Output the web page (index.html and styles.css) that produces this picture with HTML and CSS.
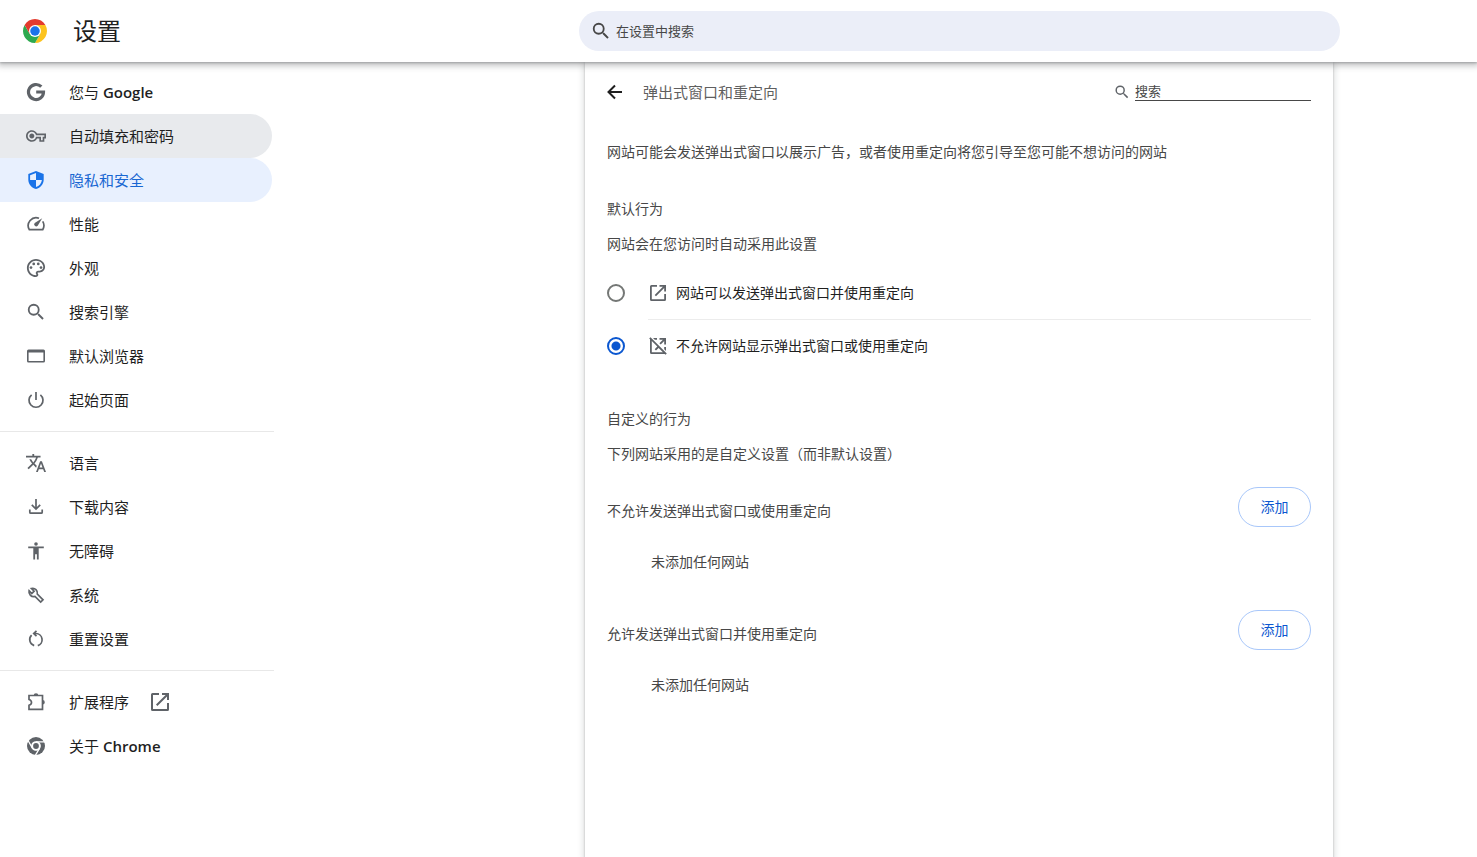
FILE: index.html
```
<!DOCTYPE html>
<html lang="zh-CN">
<head>
<meta charset="utf-8">
<title>设置</title>
<link rel="stylesheet" href="styles.css">
</head>
<body>
<header class="topbar">
  <div class="brand">
    <svg class="logo" viewBox="0 0 48 48" aria-hidden="true">
      <path fill="#fcc31e" d="M24 12H44.78A24 24 0 0 1 24 48L34.4 30Z"/>
      <path fill="#2da94f" d="M13.6 30 3.22 12A24 24 0 0 0 24 48L34.4 30Z"/>
      <path fill="#e33b2e" d="M3.22 12 13.6 30 24 24V12H44.78A24 24 0 0 0 3.22 12Z"/>
      <circle cx="24" cy="24" r="12" fill="#fff"/>
      <circle cx="24" cy="24" r="9.5" fill="#1a73e8"/>
    </svg>
    <h1 class="brand-title">设置</h1>
  </div>
  <div class="search">
    <svg class="icon search-icon" viewBox="1 1 22 22" aria-hidden="true"><path d="M15.5 14h-.79l-.28-.27A6.47 6.47 0 0 0 16 9.5 6.5 6.5 0 1 0 9.5 16c1.61 0 3.09-.59 4.23-1.57l.27.28v.79l5 4.99L20.49 19l-4.99-5zm-6 0a4.5 4.5 0 1 1 0-9 4.5 4.5 0 0 1 0 9z"/></svg>
    <input class="search-input" type="text" placeholder="在设置中搜索" aria-label="在设置中搜索">
  </div>
</header>
<div class="layout">
  <nav class="sidebar">
    <a class="item" href="#"><svg class="icon google" viewBox="0 0 20 20" aria-hidden="true"><path d="M15.300 4.700A7.500 7.500 0 1 0 17.500 10H10.200"/></svg><span>您与 <span class="latin">Google</span></span></a>
    <a class="item item-hover" href="#"><svg class="icon" viewBox="0 0 24 24" aria-hidden="true"><path d="M22 19h-6v-4h-2.680c-1.140 2.420-3.600 4-6.320 4-3.860 0-7-3.140-7-7s3.140-7 7-7c2.720 0 5.170 1.580 6.320 4H24v6h-2v4zm-4-2h2v-4h2v-2H11.940l-.23-.67C11.010 8.340 9.110 7 7 7c-2.760 0-5 2.240-5 5s2.240 5 5 5c2.110 0 4.010-1.340 4.710-3.330l.23-.67H18v4zM7 15c-1.650 0-3-1.350-3-3s1.350-3 3-3 3 1.350 3 3-1.350 3-3 3z"/></svg><span>自动填充和密码</span></a>
    <a class="item item-active" href="#" aria-current="page"><svg class="icon" viewBox="0 0 20 20" aria-hidden="true"><path fill-rule="evenodd" d="M10 1 2.300 4v5.400C2.300 14 5.500 17.800 10 19c4.500-1.200 7.700-5 7.700-9.600V4zM10 3v7h5.900c-.4 3.300-2.700 6.100-5.900 7.100V10H4.100V5.200z"/></svg><span>隐私和安全</span></a>
    <a class="item" href="#"><svg class="icon line" viewBox="0 0 20 20" aria-hidden="true"><path d="M13 4.200A8 8 0 0 0 3.300 15.700H16.700A8 8 0 0 0 16.700 7.400"/><path class="solid" d="M16.200 4.200 11.700 11.700a2 2 0 1 1-3-2.700z"/></svg><span>性能</span></a>
    <a class="item" href="#"><svg class="icon" viewBox="1 1 22 22" aria-hidden="true"><path d="M12 22C6.490 22 2 17.510 2 12S6.490 2 12 2s10 4.040 10 9c0 3.310-2.690 6-6 6h-1.770c-.28 0-.5.22-.5.5 0 .12.05.23.13.33.41.47.64 1.060.64 1.670 0 1.380-1.120 2.500-2.500 2.500zm0-18c-4.410 0-8 3.590-8 8s3.590 8 8 8c.28 0 .5-.22.5-.5 0-.16-.08-.28-.14-.35-.41-.46-.63-1.050-.63-1.650 0-1.380 1.120-2.500 2.500-2.500H16c2.210 0 4-1.790 4-4 0-3.860-3.590-7-8-7z"/><circle cx="6.500" cy="11.500" r="1.500"/><circle cx="9.500" cy="7.500" r="1.500"/><circle cx="14.500" cy="7.500" r="1.500"/><circle cx="17.500" cy="11.500" r="1.500"/></svg><span>外观</span></a>
    <a class="item" href="#"><svg class="icon" viewBox="1 1 22 22" aria-hidden="true"><path d="M15.500 14h-.79l-.28-.27A6.470 6.470 0 0 0 16 9.500 6.500 6.500 0 1 0 9.500 16c1.610 0 3.090-.59 4.230-1.570l.27.28v.79l5 4.990L20.490 19l-4.990-5zm-6 0a4.500 4.500 0 1 1 0-9 4.500 4.500 0 0 1 0 9z"/></svg><span>搜索引擎</span></a>
    <a class="item" href="#"><svg class="icon" viewBox="0 0 20 20" aria-hidden="true"><path fill-rule="evenodd" d="M2.500 3.500h15A1.500 1.500 0 0 1 19 5v10a1.500 1.500 0 0 1-1.500 1.500h-15A1.500 1.500 0 0 1 1 15V5a1.500 1.500 0 0 1 1.500-1.500zM2.600 6.600v8.300h14.800V6.600z"/></svg><span>默认浏览器</span></a>
    <a class="item" href="#"><svg class="icon line" viewBox="0 0 20 20" aria-hidden="true"><path d="M10 2v8M5.600 4.800a7 7 0 1 0 8.800 0"/></svg><span>起始页面</span></a>
    <hr class="divider">
    <a class="item" href="#"><svg class="icon" viewBox="1 1 22 22" aria-hidden="true"><path d="m12.870 15.070-2.540-2.510.03-.03A17.520 17.520 0 0 0 14.070 6H17V4h-7V2H8v2H1v2h11.170C11.500 7.920 10.440 9.750 9 11.350 8.070 10.320 7.300 9.190 6.690 8h-2c.73 1.630 1.730 3.170 2.980 4.560l-5.090 5.020L4 19l5-5 3.110 3.110.76-2.040zM18.500 10h-2L12 22h2l1.120-3h4.750L21 22h2l-4.500-12zm-2.620 7 1.620-4.330L19.120 17h-3.240z"/></svg><span>语言</span></a>
    <a class="item" href="#"><svg class="icon line" viewBox="0 0 20 20" aria-hidden="true"><path d="M10 2v9.500M5.800 7.800 10 12l4.200-4.200M3.800 12.500v2.700q0 1 1 1h10.400q1 0 1-1v-2.700"/></svg><span>下载内容</span></a>
    <a class="item" href="#"><svg class="icon" viewBox="0 0 20 20" aria-hidden="true"><circle cx="10" cy="3" r="1.800"/><path d="M2.200 5.600h15.600v1.700h-5.100v11.200h-1.800v-5.300H9.100v5.300H7.300V7.300H2.200z"/></svg><span>无障碍</span></a>
    <a class="item" href="#"><svg class="icon line" viewBox="0 0 20 20" aria-hidden="true"><path d="M5.400 3.500 8.100 6.200 5.800 8.500 3.100 5.800A4.700 4.700 0 0 0 9 11.400L14.700 17.100 17 14.800 11.300 9.100A4.700 4.700 0 0 0 5.400 3.500Z"/></svg><span>系统</span></a>
    <a class="item" href="#"><svg class="icon line" viewBox="0 0 20 20" aria-hidden="true"><path d="M8.200 16.600A6.200 6.200 0 0 1 5.600 6.200M11.800 16.600A6.200 6.200 0 0 0 10 4.500H8M10.500 1.800 7.700 4.500 10.500 7.200"/></svg><span>重置设置</span></a>
    <hr class="divider">
    <a class="item" href="#"><svg class="icon line" viewBox="0 0 20 20" aria-hidden="true"><path d="M3 3.500H16.500V17.300H3V13.300Q5.500 12.500 5.500 10.400T3 7.500Z"/><path class="solid" d="M7.700 3.500a2.300 2.300 0 0 1 4.600 0zM16.500 8a2.300 2.300 0 0 1 0 4.600z"/></svg><span>扩展程序</span><svg class="icon launch" viewBox="0 0 20 20" aria-hidden="true"><path d="M9 1v2H3v14h14v-6h2v6.500a1.500 1.500 0 0 1-1.500 1.500h-15A1.500 1.500 0 0 1 1 17.500v-15A1.500 1.500 0 0 1 2.500 1zM12 1h7v7h-2V4.400L7.400 14 6 12.600 15.600 3H12z"/></svg></a>
    <a class="item" href="#"><svg class="icon" viewBox="0 0 20 20" aria-hidden="true"><circle cx="10" cy="10" r="9"/><g class="cut"><circle cx="10" cy="10" r="4.200"/><path d="M10 5.800H19M6.400 12.100 1.900 4.300M13.600 12.100 9.100 19.900"/></g><circle cx="10" cy="10" r="2.900"/></svg><span>关于 <span class="latin">Chrome</span></span></a>
  </nav>
  <main class="panel">
    <div class="panel-head">
      <button class="back" type="button" aria-label="返回"><svg class="back-icon" viewBox="0 0 16 16" aria-hidden="true"><path d="M15 8H1.700M8 1.500 1.500 8 8 14.500"/></svg></button>
      <h2 class="panel-title">弹出式窗口和重定向</h2>
      <label class="filter">
        <svg class="icon filter-icon" viewBox="1 1 22 22" aria-hidden="true"><path d="M15.500 14h-.79l-.28-.27A6.470 6.470 0 0 0 16 9.500 6.500 6.500 0 1 0 9.500 16c1.610 0 3.090-.59 4.230-1.570l.27.28v.79l5 4.990L20.490 19l-4.990-5zm-6 0a4.500 4.500 0 1 1 0-9 4.500 4.500 0 0 1 0 9z"/></svg>
        <input class="filter-input" type="text" placeholder="搜索" aria-label="搜索">
      </label>
    </div>
    <p class="intro">网站可能会发送弹出式窗口以展示广告，或者使用重定向将您引导至您可能不想访问的网站</p>
    <section class="section">
      <h3 class="section-title">默认行为</h3>
      <p class="section-text">网站会在您访问时自动采用此设置</p>
      <div class="options">
        <label class="option">
          <input class="radio" type="radio" name="popups">
          <span class="option-body"><svg class="option-icon" viewBox="0 0 20 20" aria-hidden="true"><path d="M9 2v1.800H3.800v12.400h12.400V11H18v5.500a1.500 1.500 0 0 1-1.500 1.500h-13A1.500 1.500 0 0 1 2 16.500v-13A1.500 1.500 0 0 1 3.500 2zM11.500 2H18v6.500h-1.800V5.100L8 13.300 6.700 12l8.200-8.200h-3.400z"/></svg>网站可以发送弹出式窗口并使用重定向</span>
        </label>
        <label class="option">
          <input class="radio" type="radio" name="popups" checked>
          <span class="option-body"><svg class="option-icon" viewBox="0 0 20 20" aria-hidden="true"><path d="M1.200 2.500 2.500 1.200 18.800 17.500 17.500 18.800 16.700 18H3.500A1.500 1.500 0 0 1 2 16.500V3.300zM3.800 5.100v11.100h11.100L10.600 11.900 8 14.500 6.700 13.200 9.300 10.600zM5 2h4v1.800H6.800zM11.500 2H18v6.500h-1.800V5.100L12.700 8.600 11.400 7.300 14.900 3.800h-3.400zM16.200 11H18v4l-1.800-1.800z"/></svg>不允许网站显示弹出式窗口或使用重定向</span>
        </label>
      </div>
    </section>
    <section class="section">
      <h3 class="section-title">自定义的行为</h3>
      <p class="section-text">下列网站采用的是自定义设置（而非默认设置）</p>
      <div class="list-head"><h4 class="list-title">不允许发送弹出式窗口或使用重定向</h4><button class="add" type="button">添加</button></div>
      <p class="empty">未添加任何网站</p>
      <div class="list-head"><h4 class="list-title">允许发送弹出式窗口并使用重定向</h4><button class="add" type="button">添加</button></div>
      <p class="empty">未添加任何网站</p>
    </section>
  </main>
</div>
</body>
</html>
```
FILE: styles.css
```
* {
  box-sizing: border-box;
}

body {
  margin: 0;
  min-height: 100vh;
  display: flex;
  flex-direction: column;
  background: #fff;
  color: #474747;
  font: 14px/20px "Open Sans", "Noto Sans CJK SC", sans-serif;
}

h1, h2, h3, h4, p {
  margin: 0;
  font-size: 14px;
  font-weight: 400;
}

button, input {
  font: inherit;
}

.icon {
  flex: none;
  width: 20px;
  height: 20px;
  fill: #5f6368;
}

.line {
  fill: none;
  stroke: #5f6368;
  stroke-width: 1.7;
}

.google {
  fill: none;
  stroke: #5f6368;
  stroke-width: 3.2;
}

.solid {
  fill: #5f6368;
  stroke: none;
}

.cut {
  fill: #fff;
  stroke: #fff;
  stroke-width: 1.3;
}

/* Top bar */
.topbar {
  position: relative;
  z-index: 1;
  display: grid;
  grid-template-columns: 274px 305fr minmax(0, 761px) 137fr;
  align-items: center;
  height: 62px;
  background: #fff;
  box-shadow: 0 1px 2px rgba(60, 64, 67, .3), 0 2px 6px 2px rgba(60, 64, 67, .3);
}

.brand {
  display: flex;
  align-items: center;
  gap: 26px;
  padding-left: 23px;
}

.logo {
  width: 24px;
  height: 24px;
}

.brand-title {
  color: #1f1f1f;
  font-size: 24px;
  line-height: 32px;
}

.search {
  grid-column: 3;
  display: flex;
  align-items: center;
  gap: 5px;
  height: 40px;
  padding: 0 20px 0 12px;
  border-radius: 20px;
  background: #ebeef8;
}

.search-icon {
  fill: #474747;
}

.search-input {
  flex: 1;
  min-width: 0;
  padding: 0;
  border: 0;
  outline: 0;
  background: none;
  font-size: 13px;
}

.search-input::placeholder,
.filter-input::placeholder {
  color: #474747;
  opacity: 1;
}

/* Page columns */
.layout {
  flex: 1;
  display: grid;
  grid-template-columns: 274px 311fr minmax(0, 748px) 144fr;
}

/* Sidebar */
.sidebar {
  padding-top: 8px;
}

.item {
  display: flex;
  align-items: center;
  gap: 23px;
  height: 44px;
  margin-right: 2px;
  padding-left: 26px;
  border-radius: 0 22px 22px 0;
  color: #1f1f1f;
  font-size: 15px;
  text-decoration: none;
}

.latin {
  font-weight: 600;
}

.item-hover {
  background: #e8eaed;
}

.item-active {
  background: #e8f0fe;
  color: #1967d2;
}

.item-active .icon {
  fill: #1a73e8;
}

.launch {
  margin-left: -2px;
}

.divider {
  margin: 9px 0;
  border: 0;
  border-top: 1px solid #e8e8e8;
}

/* Content panel */
.panel {
  grid-column: 3;
  padding: 0 22px 40px;
  background: #fff;
  box-shadow: 0 1px 2px rgba(60, 64, 67, .3), 0 2px 6px 2px rgba(60, 64, 67, .15);
}

.panel-head {
  display: flex;
  align-items: center;
  height: 60px;
}

.back {
  display: flex;
  padding: 0;
  border: 0;
  background: none;
}

.back-icon {
  width: 16px;
  height: 16px;
  fill: none;
  stroke: #1f1f1f;
  stroke-width: 2;
}

.panel-title {
  flex: 1;
  margin-left: 20px;
  color: #5f5f5f;
  font-size: 15px;
}

.filter {
  display: flex;
  align-items: center;
  gap: 5px;
}

.filter-icon {
  width: 16px;
  height: 16px;
}

.filter-input {
  width: 176px;
  height: 20px;
  margin-bottom: 2px;
  padding: 0;
  border: 0;
  border-bottom: 1px solid #474747;
  outline: 0;
  background: none;
  font-size: 13px;
}

.intro {
  margin-top: 20px;
}

.section {
  margin-top: 37px;
}

.section-text {
  margin-top: 15px;
}

.options {
  margin-top: 12px;
}

.option {
  display: flex;
  align-items: center;
  gap: 23px;
  color: #1f1f1f;
}

.option-body {
  flex: 1;
  display: flex;
  align-items: center;
  gap: 8px;
  height: 53px;
}

.option + .option .option-body {
  border-top: 1px solid #ececec;
}

.option-icon {
  width: 20px;
  height: 20px;
  fill: #5f6368;
}

.radio {
  appearance: none;
  width: 18px;
  height: 18px;
  margin: 0;
  border: 2px solid #747775;
  border-radius: 50%;
}

.radio:checked {
  border-color: #0b57d0;
  background: radial-gradient(circle, #0b57d0 0 4px, transparent 5px);
}

.list-head {
  display: flex;
  justify-content: space-between;
  margin-top: 38px;
}

.section-text + .list-head {
  margin-top: 23px;
}

.list-title {
  margin-top: 14px;
}

.add {
  width: 73px;
  height: 40px;
  padding: 0;
  border: 1px solid #a8c7fa;
  border-radius: 20px;
  background: #fff;
  color: #0b57d0;
}

.empty {
  margin-top: 25px;
  padding-left: 44px;
}
```
